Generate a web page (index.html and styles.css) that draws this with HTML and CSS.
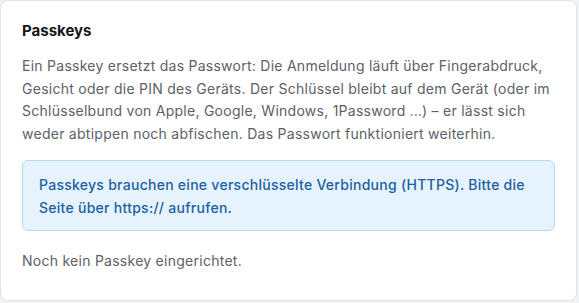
FILE: index.html
```html
<!DOCTYPE html>
<html lang="de">
<head>
<meta charset="utf-8">
<link rel="stylesheet" href="styles.css">
</head>
<body>
<section class="card">
  <h2 class="title">Passkeys</h2>
  <p class="desc">Ein Passkey ersetzt das Passwort: Die Anmeldung läuft über Fingerabdruck, Gesicht oder die PIN des Geräts. Der Schlüssel bleibt auf dem Gerät (oder im Schlüsselbund von Apple, Google, Windows, 1Password …) – er lässt sich weder abtippen noch abfischen. Das Passwort funktioniert weiterhin.</p>
  <div class="notice">Passkeys brauchen eine verschlüsselte Verbindung (HTTPS). Bitte die Seite über https:// aufrufen.</div>
  <p class="empty">Noch kein Passkey eingerichtet.</p>
</section>
</body>
</html>
```
FILE: styles.css
```css
html, body {
  margin: 0;
  padding: 0;
  background: #f1f2f4;
}
body {
  font-family: Inter, "Noto Sans", sans-serif;
  color: #5d6168;
}
.card {
  box-sizing: border-box;
  width: 577px;
  height: 301px;
  background: #fff;
  border: 1px solid #e2e4e7;
  border-radius: 8px;
  padding: 19px 21px;
}
.title {
  margin: 0;
  font-size: 15px;
  font-weight: 700;
  color: #15171a;
  line-height: 22px;
}
.desc {
  margin: 13px 0 0;
  font-size: 14px;
  line-height: 22.5px;
  letter-spacing: 0.26px;
}
.notice {
  margin-top: 15px;
  background: #e6f3fd;
  border: 1px solid #b5daf5;
  border-radius: 6px;
  padding: 12px 16px 11px;
  font-size: 14px;
  line-height: 23px;
  letter-spacing: 0.27px;
  color: #2060a3;
  font-weight: 500;
}
.empty {
  margin: 19px 0 0;
  font-size: 14px;
  line-height: 22px;
  letter-spacing: 0.26px;
}
```
